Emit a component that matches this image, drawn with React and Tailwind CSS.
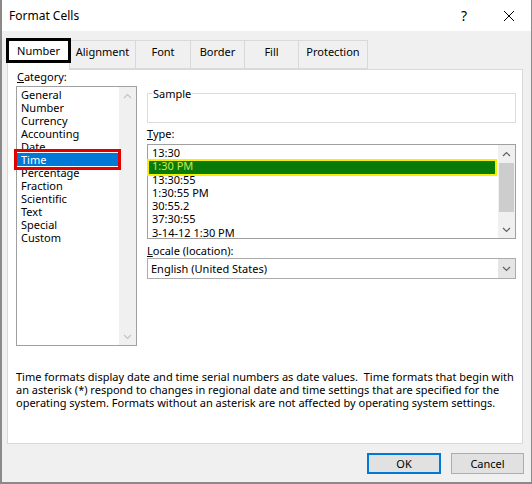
import React from 'react';

const categories = ['General', 'Number', 'Currency', 'Accounting', 'Date', 'Time', 'Percentage', 'Fraction', 'Scientific', 'Text', 'Special', 'Custom'];
const types = ['13:30', '1:30 PM', '13:30:55', '1:30:55 PM', '30:55.2', '37:30:55', '3-14-12 1:30 PM'];
const tabs = [
  { name: 'Alignment', w: 'w-[66px]' },
  { name: 'Font', w: 'w-[55px]' },
  { name: 'Border', w: 'w-[54px]' },
  { name: 'Fill', w: 'w-[54px]' },
  { name: 'Protection', w: 'w-[69px]' },
];

const Chevron = ({ up, color }) => (
  <svg width="9" height="6" viewBox="0 0 9 6" className="block">
    <path d={up ? 'M1 5 L4.5 1.5 L8 5' : 'M1 1 L4.5 4.5 L8 1'} fill="none" stroke={color} strokeWidth="1.2" />
  </svg>
);

// Scrollbar column used by both list boxes
const ScrollBar = ({ disabled }) => {
  const c = disabled ? '#c4c4c4' : '#606060';
  return (
    <div className="w-[17px] bg-[#f0f0f0] flex flex-col">
      <div className="h-[17px] flex items-center justify-center"><Chevron up color={c} /></div>
      <div className="flex-1 px-[1px] pt-[1px]">
        {!disabled && <div className="h-[49px] bg-[#cdcdcd]" />}
      </div>
      <div className="h-[17px] flex items-center justify-center"><Chevron color={c} /></div>
    </div>
  );
};

export default function App() {
  return (
    <div className="w-[532px] h-[484px] bg-[#f0f0f0] border-l-2 border-r border-b-2 border-[#8a8a8a] flex flex-col text-[11px] text-black font-['Noto_Sans',sans-serif]">
      {/* Title bar */}
      <div className="h-[31px] bg-white flex items-center pl-[7px] shrink-0">
        <span className="text-[12px] leading-[14px]">Format Cells</span>
        <span className="ml-auto mr-[36px] text-[14px] leading-[14px]">?</span>
        <svg width="12" height="12" viewBox="0 0 12 12" className="mr-[16px]">
          <path d="M1 1 L11 11 M11 1 L1 11" stroke="#000" strokeWidth="1" />
        </svg>
      </div>

      {/* Tabs */}
      <div className="h-[38px] flex items-end pl-[5px] shrink-0">
        <div className="relative z-10 w-[63px] h-[32px] -mb-[1px] bg-white border border-b-0 border-[#d9d9d9] flex justify-center pt-[5px]">
          <span className="leading-[14px]">Number</span>
          <div className="absolute left-[-2px] top-[-1px] w-[65px] h-[25px] border-[3px] border-black" />
        </div>
        {tabs.map((t) => (
          <div key={t.name} className={`${t.w} h-[29px] border border-l-0 border-[#d9d9d9] flex justify-center pt-[4px]`}>
            <span className="leading-[14px]">{t.name}</span>
          </div>
        ))}
      </div>

      {/* Panel */}
      <div className="ml-[5px] w-[516px] h-[375px] bg-white border border-[#d9d9d9] shrink-0 pl-[8px]">
        <div className="flex gap-[10px] h-[276px]">
          {/* Category */}
          <div className="w-[121px] flex flex-col">
            <div className="h-[13px] leading-[13px] pl-[1px]"><span className="underline">C</span>ategory:</div>
            <div className="mt-[3px] h-[260px] border border-[#a0a0a0] flex">
              <div className="flex-1 pt-[1px]">
                {categories.map((c) =>
                  c === 'Time' ? (
                    <div key={c} className="relative h-[13px] leading-[13px] pl-[4px] bg-[#0078d7] text-white">
                      {c}
                      <div className="absolute left-[-3px] right-[-2px] top-[-4px] bottom-[-4px] border-[3px] border-[#e00000]" />
                    </div>
                  ) : (
                    <div key={c} className="h-[13px] leading-[13px] pl-[4px]">{c}</div>
                  )
                )}
              </div>
              <ScrollBar disabled />
            </div>
          </div>

          {/* Right side */}
          <div className="w-[369px] flex flex-col">
            <fieldset className="mt-[17px] h-[36px] border border-[#dcdcdc] px-[4px]">
              <legend className="px-[1px] leading-[13px]">Sample</legend>
            </fieldset>
            <div className="mt-[4px] h-[13px] leading-[13px]"><span className="underline">T</span>ype:</div>
            <div className="mt-[4px] h-[95px] border border-[#a0a0a0] flex">
              <div className="flex-1 pt-[1px]">
                {types.map((t) =>
                  t === '1:30 PM' ? (
                    <div key={t} className="relative h-[13.3px] leading-[13px] pl-[4px]">
                      <div className="absolute left-[-1px] right-[1px] top-[0px] bottom-[-3px] border-2 border-[#f2f200] bg-[#077a07]" />
                      <span className="relative text-[#c8ea52]">{t}</span>
                    </div>
                  ) : (
                    <div key={t} className="h-[13.3px] leading-[13px] pl-[4px]">{t}</div>
                  )
                )}
              </div>
              <ScrollBar />
            </div>
            <div className="mt-[5px] h-[13px] leading-[13px]"><span className="underline">L</span>ocale (location):</div>
            <div className="mt-[1px] h-[21px] border border-[#acacac] flex items-center">
              <span className="pl-[3px] flex-1 leading-[13px]">English (United States)</span>
              <div className="w-[17px] h-full bg-[#e5e5e5] flex items-center justify-center">
                <Chevron color="#606060" />
              </div>
            </div>
          </div>
        </div>

        <div className="mt-[24px] leading-[13px] whitespace-pre">
          {'Time formats display date and time serial numbers as date values.  Time formats that begin with\nan asterisk (*) respond to changes in regional date and time settings that are specified for the\noperating system. Formats without an asterisk are not affected by operating system settings.'}
        </div>
      </div>

      {/* Buttons */}
      <div className="mt-[9px] flex justify-end gap-[10px] pr-[7px]">
        <button className="w-[74px] h-[21px] bg-[#e1e1e1] border-2 border-[#0078d7] text-[11px] leading-[13px]">OK</button>
        <button className="w-[73px] h-[21px] bg-[#e1e1e1] border border-[#adadad] text-[11px] leading-[13px]">Cancel</button>
      </div>
    </div>
  );
}
